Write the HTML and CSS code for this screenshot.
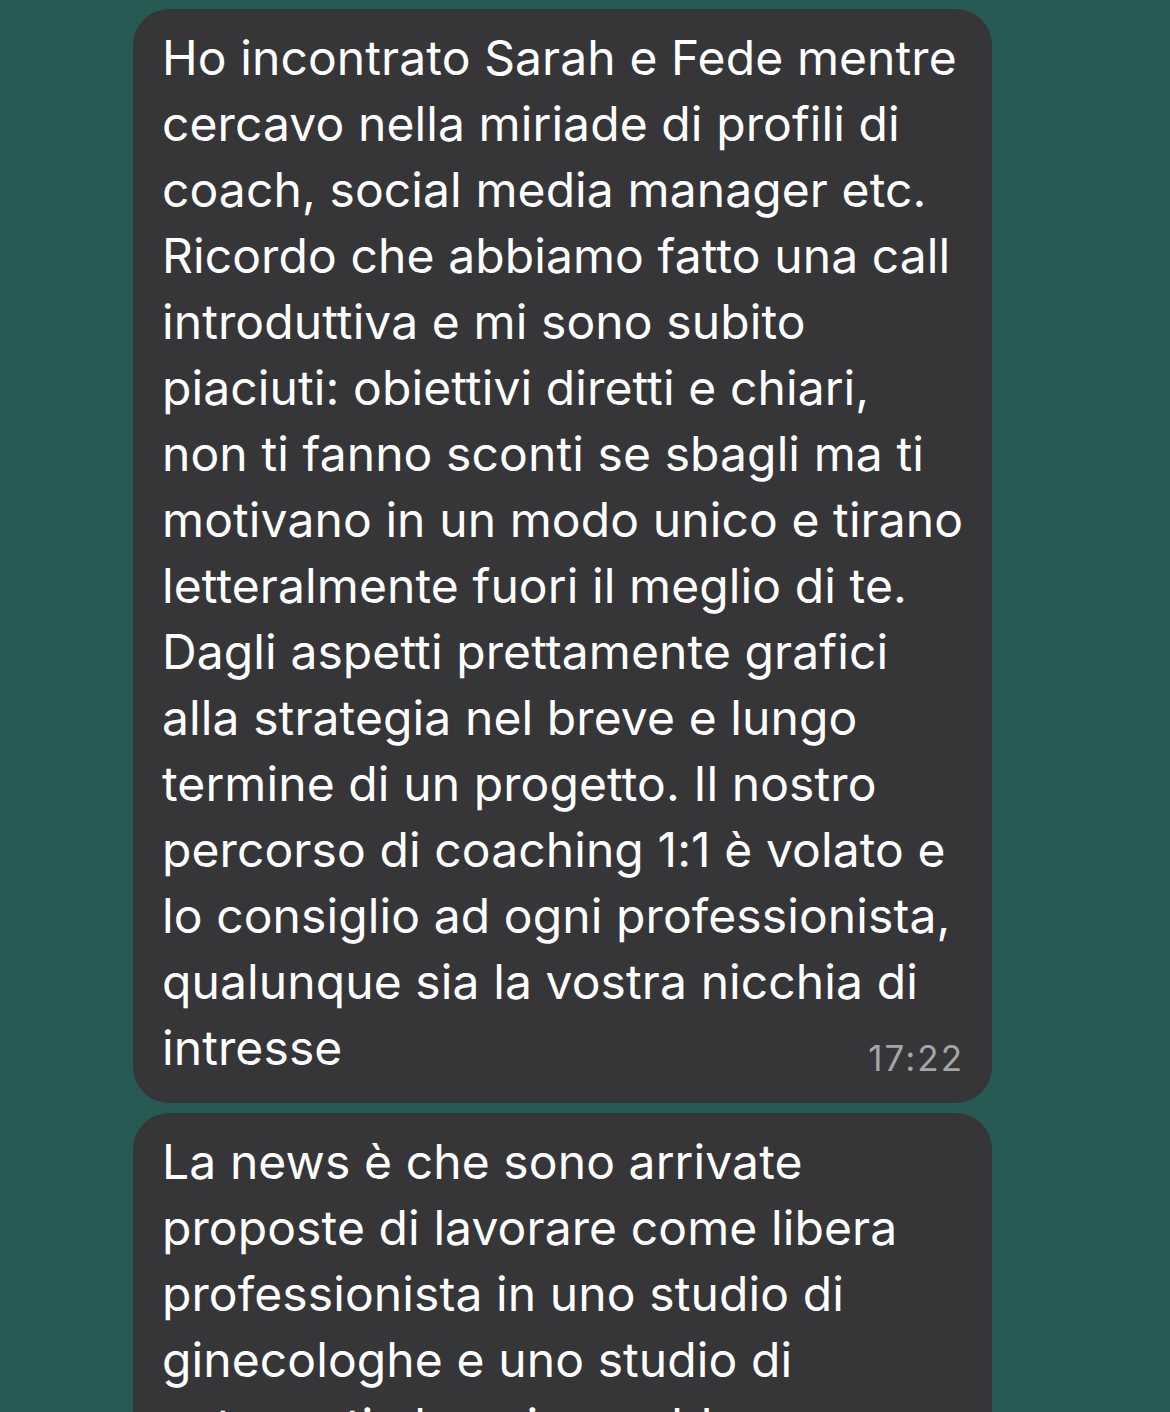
FILE: index.html
```html
<!DOCTYPE html>
<html lang="it">
<head>
    <meta charset="UTF-8">
    <title>Chat</title>
    <link rel="stylesheet" href="styles.css">
</head>
<body>
    <div class="chat">
        <div class="bubble">
            <p class="testo">
                <span class="riga">Ho incontrato Sarah e Fede mentre</span>
                <span class="riga">cercavo nella miriade di profili di</span>
                <span class="riga">coach, social media manager etc.</span>
                <span class="riga">Ricordo che abbiamo fatto una call</span>
                <span class="riga">introduttiva e mi sono subito</span>
                <span class="riga">piaciuti: obiettivi diretti e chiari,</span>
                <span class="riga">non ti fanno sconti se sbagli ma ti</span>
                <span class="riga">motivano in un modo unico e tirano</span>
                <span class="riga">letteralmente fuori il meglio di te.</span>
                <span class="riga">Dagli aspetti prettamente grafici</span>
                <span class="riga">alla strategia nel breve e lungo</span>
                <span class="riga">termine di un progetto. Il nostro</span>
                <span class="riga">percorso di coaching 1:1 è volato e</span>
                <span class="riga">lo consiglio ad ogni professionista,</span>
                <span class="riga">qualunque sia la vostra nicchia di</span>
                <span class="riga ultima">intresse <span class="ora">17:22</span></span>
            </p>
        </div>
        <div class="bubble">
            <p class="testo">
                <span class="riga">La news è che sono arrivate</span>
                <span class="riga">proposte di lavorare come libera</span>
                <span class="riga">professionista in uno studio di</span>
                <span class="riga">ginecologhe e uno studio di</span>
                <span class="riga">osteopati che mi vorrebbero come</span>
            </p>
        </div>
    </div>
</body>
</html>
```

FILE: styles.css
```css
* {
    margin: 0;
    padding: 0;
    box-sizing: border-box;
}

body {
    background-color: #275a55;
    font-family: Inter, "Open Sans", sans-serif;
    height: 1412px;
    overflow: hidden;
}

.chat {
    display: flex;
    flex-direction: column;
    gap: 10px;
    padding: 9px 0 0 133px;
}

.bubble {
    width: 859px;
    background-color: #363638;
    border-radius: 36px;
    padding: 16px 30px 22px 29px;
}

.testo {
    color: #ffffff;
    font-size: 48px;
    line-height: 66px;
    letter-spacing: 0.1px;
}

.riga {
    display: block;
    white-space: nowrap;
}

.ultima {
    display: flex;
    justify-content: space-between;
    align-items: flex-end;
}

.ora {
    color: #a5a5a8;
    font-size: 35px;
    line-height: 50px;
    letter-spacing: 2px;
    margin-right: -2px;
    margin-bottom: -2px;
}
```
